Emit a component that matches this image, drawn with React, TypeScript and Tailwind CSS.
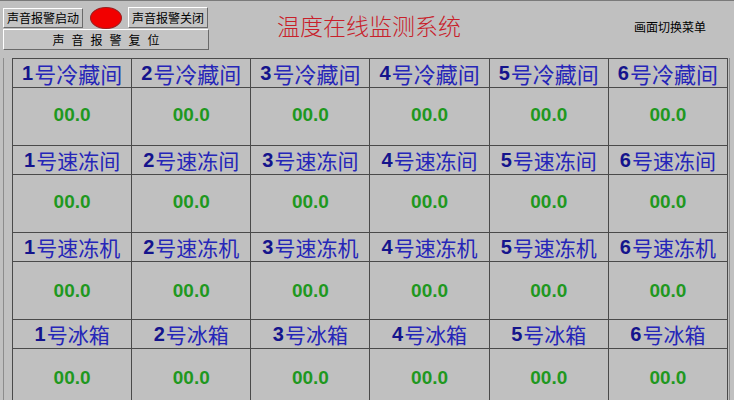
import React from 'react';

const rows = [
  { name: '冷藏间', size: 'text-[22px]' },
  { name: '速冻间', size: 'text-[21px]' },
  { name: '速冻机', size: 'text-[21px]' },
  { name: '冰箱', size: 'text-[21px]' },
];

const Btn = ({ label, className }: { label: string; className?: string }) => (
  <div
    className={`flex items-center justify-center border border-t-white border-l-white border-b-[#6a6a6a] border-r-[#6a6a6a] bg-[#c4c4c4] text-[12px] leading-none text-black ${className ?? ''}`}
  >
    {label}
  </div>
);

export default function App() {
  return (
    <div
      className="w-[734px] h-[400px] overflow-hidden bg-[#c0c0c0] border-t border-[#7a7a7a] flex flex-col"
      style={{ fontFamily: '"Noto Sans CJK SC", "Liberation Sans", sans-serif' }}
    >
      {/* header */}
      <div className="h-[57px] flex shrink-0">
        <div className="pl-[3px] pt-[6px] w-[212px] flex flex-col">
          <div className="flex items-center h-[21px]">
            <Btn label="声音报警启动" className="w-[80px] h-[20px]" />
            <div className="ml-[7px] w-[32px] h-[22px] rounded-[50%] bg-[#f20000] border border-[#9a2020]" />
            <Btn label="声音报警关闭" className="ml-[6px] w-[80px] h-[21px]" />
          </div>
          <Btn label="声音报警复位" className="w-[206px] h-[21px] mt-[1px] tracking-[7px] pl-[7px]" />
        </div>
        <div className="flex-1 flex items-start justify-center pt-[9px] pr-[108px]">
          <span className="text-[23px] leading-[30px] text-[#c8202a] font-light">温度在线监测系统</span>
        </div>
        <div className="w-[100px] pt-[18px] text-[12px] leading-[16px] text-black">画面切换菜单</div>
      </div>

      {/* body */}
      <div className="flex-1 ml-[3px] border-l border-[#8c8c8c] pl-[8px] pr-[3px] flex">
        <div className="w-[716px] border-t border-l border-[#4a4a4a]">
          {rows.map((r, i) => (
            <div key={r.name} className="grid grid-cols-6">
              {[1, 2, 3, 4, 5, 6].map((n) => (
                <div key={n} className="border-r border-b border-[#4a4a4a] flex flex-col">
                  <div className="h-[29px] border-b border-[#4a4a4a] flex items-center justify-center whitespace-nowrap text-[#2626b8]">
                    <span className="font-bold text-[#14148c] text-[20px] leading-none mr-[1px]" style={{ fontFamily: '"Liberation Sans", sans-serif' }}>{n}</span>
                    <span className={`${r.size} leading-none`}>号{r.name}</span>
                  </div>
                  <div className={`h-[57px] flex items-start justify-center ${i < 2 ? 'pt-[17px]' : 'pt-[19px]'}`}>
                    <span className="font-bold text-[19px] leading-none text-[#1f981f]" style={{ fontFamily: '"Liberation Sans", sans-serif' }}>00.0</span>
                  </div>
                </div>
              ))}
            </div>
          ))}
        </div>
        <div className="ml-[1px] w-[1px] bg-[#8c8c8c]" />
      </div>
    </div>
  );
}
